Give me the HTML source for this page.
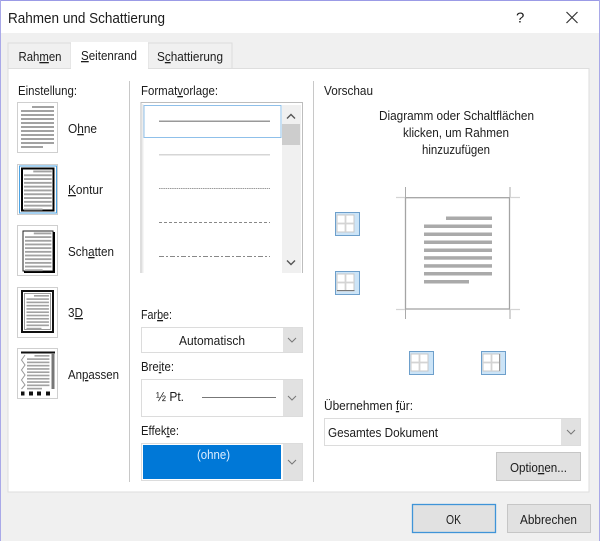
<!DOCTYPE html>
<html><head><meta charset="utf-8"><title>Rahmen und Schattierung</title>
<style>
html,body{margin:0;padding:0;background:#f0f0f0;width:600px;height:541px;overflow:hidden}
svg{display:block;position:absolute;left:0;top:0;filter:blur(.35px)}
text{font-family:"Liberation Sans",sans-serif;font-size:13px;fill:#1c1c1c}
.u{text-decoration:underline}
</style></head><body>
<svg width="600" height="541" viewBox="0 0 600 541" xmlns="http://www.w3.org/2000/svg">
<defs>
<g id="ln" fill="#a2a2a2">
<rect x="11" y="0" width="22" height="2"/><rect x="0" y="4" width="33" height="2"/><rect x="0" y="8" width="33" height="2"/><rect x="0" y="12" width="33" height="2"/><rect x="0" y="16" width="33" height="2"/><rect x="0" y="20" width="33" height="2"/><rect x="0" y="24" width="33" height="2"/><rect x="0" y="28" width="33" height="2"/><rect x="0" y="32" width="33" height="2"/><rect x="0" y="36" width="33" height="2"/><rect x="0" y="40" width="22" height="2"/>
</g>
<g id="cell"><rect x=".5" y=".5" width="24" height="23" fill="#cce4f7" stroke="#6d9fcb"/><rect x="2" y="3" width="17" height="17" fill="#fff" stroke="#c8c8c8" stroke-width="1"/><path d="M10.500 3V20M2 11.500H19" stroke="#d4d4d4" stroke-width="1.800"/></g>
<path id="chev" d="M-4-2 0 2 4-2" fill="none" stroke="#777" stroke-width="1"/>
</defs>

<rect width="600" height="541" fill="#f0f0f0"/>
<rect width="600" height="33" fill="#fff"/>
<rect width="600" height="1" fill="#9b9be6"/>
<rect width="1" height="541" fill="#a9a9e8"/>
<rect x="599" width="1" height="541" fill="#a9a9e8"/>
<text x="8" y="23" style="font-size:14.500px" textLength="157" lengthAdjust="spacingAndGlyphs">Rahmen und Schattierung</text>
<text x="516" y="22.500" style="font-size:15px" fill="#333">?</text>
<path d="M566.500 12 577.500 23M577.500 12 566.500 23" stroke="#333" stroke-width="1.200"/>

<!-- tabs and panel -->
<rect x="8" y="43" width="63" height="26" fill="#f0f0f0" stroke="#dcdcdc"/>
<rect x="148" y="43" width="84" height="26" fill="#f0f0f0" stroke="#dcdcdc"/>
<rect x="8" y="68.500" width="581" height="423.500" fill="#fff" stroke="#dedede"/>
<rect x="71" y="42" width="77" height="28" fill="#fff"/>
<text x="18.500" y="61" textLength="43" lengthAdjust="spacingAndGlyphs">Rah<tspan class="u">m</tspan>en</text>
<text x="81" y="60" textLength="56" lengthAdjust="spacingAndGlyphs"><tspan class="u">S</tspan>eitenrand</text>
<text x="157" y="61" textLength="66" lengthAdjust="spacingAndGlyphs">S<tspan class="u">c</tspan>hattierung</text>

<rect x="129" y="81" width="1" height="401" fill="#c8c8c8"/>
<rect x="313" y="81" width="1" height="401" fill="#c8c8c8"/>

<!-- Einstellung -->
<text x="18" y="95" textLength="59" lengthAdjust="spacingAndGlyphs">Einstellung:</text>
<g fill="#fff" stroke="#cfcfcf">
<rect x="17.500" y="102.500" width="40" height="50"/>
<rect x="17.500" y="164.500" width="40" height="50"/>
<rect x="17.500" y="225.500" width="40" height="50"/>
<rect x="17.500" y="287.500" width="40" height="50"/>
<rect x="17.500" y="348.500" width="40" height="50"/>
</g>
<use href="#ln" x="21" y="106"/>
<!-- Kontur -->
<rect x="19.500" y="166" width="37" height="47" fill="#fff" stroke="#4ba3e3"/>
<rect x="22" y="168.500" width="31.500" height="42" fill="#fff" stroke="#000" stroke-width="2"/>
<use href="#ln" transform="translate(24 170.500) scale(.84 .95)"/>
<!-- Schatten -->
<rect x="23" y="231" width="30" height="40" fill="#fff" stroke="#222" stroke-width="1"/>
<path d="M54 232V272H24" fill="none" stroke="#000" stroke-width="2"/>
<use href="#ln" transform="translate(25 232.500) scale(.8 .92)"/>
<!-- 3D -->
<rect x="22" y="291" width="31" height="41" fill="#fff" stroke="#111" stroke-width="2"/>
<rect x="24.500" y="293.500" width="26" height="36" fill="#fff" stroke="#999" stroke-width="1"/>
<use href="#ln" transform="translate(26.500 295) scale(.68 .82)"/>
<!-- Anpassen -->
<rect x="21" y="351.500" width="34" height="2" fill="#111"/>
<rect x="51.500" y="353" width="3" height="36" fill="#777"/>
<path d="M25 355 21.500 360 25 365 21.500 370 25 375 21.500 380 25 385 21.500 389" fill="none" stroke="#999" stroke-width="1"/>
<use href="#ln" transform="translate(27 355) scale(.68 .82)"/>
<g fill="#111"><rect x="21" y="391.500" width="3.500" height="4"/><rect x="29" y="391.500" width="4" height="4"/><rect x="37" y="391.500" width="4" height="4"/><rect x="46" y="391.500" width="4" height="4"/></g>
<text x="68" y="133" textLength="29" lengthAdjust="spacingAndGlyphs">O<tspan class="u">h</tspan>ne</text>
<text x="68" y="194" textLength="35" lengthAdjust="spacingAndGlyphs"><tspan class="u">K</tspan>ontur</text>
<text x="68" y="256" textLength="46" lengthAdjust="spacingAndGlyphs">Sch<tspan class="u">a</tspan>tten</text>
<text x="68" y="317" textLength="15" lengthAdjust="spacingAndGlyphs">3<tspan class="u">D</tspan></text>
<text x="68" y="379" textLength="51" lengthAdjust="spacingAndGlyphs">An<tspan class="u">p</tspan>assen</text>

<!-- Formatvorlage -->
<text x="141" y="95" textLength="77" lengthAdjust="spacingAndGlyphs">Format<tspan class="u">v</tspan>orlage:</text>
<rect x="141" y="102.500" width="161.500" height="170.500" fill="#fff"/>
<path d="M141 273V102.500H302.500V273" fill="none" stroke="#bdbdbd"/>
<rect x="142" y="104" width="1.500" height="169" fill="#ececec"/>
<rect x="144" y="105.500" width="137" height="32" fill="#fff" stroke="#8fc0ea"/>
<rect x="282" y="105" width="19" height="168" fill="#f0f0f0"/>
<rect x="282" y="124" width="18" height="21" fill="#cdcdcd"/>
<path d="M287 118.500 291 114.500 295 118.500" stroke="#555" stroke-width="1.400" fill="none"/>
<path d="M287 260.500 291 264.500 295 260.500" stroke="#555" stroke-width="1.400" fill="none"/>
<rect x="159" y="120.500" width="111" height="1.500" fill="#999"/>
<rect x="159" y="154" width="111" height="1.500" fill="#d6d6d6"/>
<path d="M159 188.500H270" stroke="#999" stroke-width="1" stroke-dasharray="1.500 .7"/>
<path d="M159 222.500H270" stroke="#888" stroke-width="1" stroke-dasharray="3 2"/>
<path d="M159 256.500H270" stroke="#888" stroke-width="1" stroke-dasharray="5 2 2 2"/>

<!-- Farbe -->
<text x="141" y="319" textLength="31" lengthAdjust="spacingAndGlyphs">Far<tspan class="u">b</tspan>e:</text>
<rect x="141.500" y="327.500" width="161" height="25" fill="#fff" stroke="#dcdcdc"/>
<rect x="283" y="328" width="19" height="24" fill="#e1e1e1"/>
<rect x="282" y="328" width="1" height="24" fill="#fff"/>
<text x="179" y="345" textLength="66" lengthAdjust="spacingAndGlyphs">Automatisch</text>
<use href="#chev" x="292" y="340"/>

<!-- Breite -->
<text x="141" y="371" textLength="33" lengthAdjust="spacingAndGlyphs">Bre<tspan class="u">i</tspan>te:</text>
<rect x="141.500" y="379.500" width="161" height="37" fill="#fff" stroke="#dcdcdc"/>
<rect x="283" y="380" width="19" height="36" fill="#e1e1e1"/>
<text x="156" y="401" textLength="28" lengthAdjust="spacingAndGlyphs">½ Pt.</text>
<rect x="202" y="397" width="74" height="1" fill="#777"/>
<use href="#chev" x="292" y="398"/>

<!-- Effekte -->
<text x="141" y="435" textLength="38" lengthAdjust="spacingAndGlyphs">Effek<tspan class="u">t</tspan>e:</text>
<rect x="141.500" y="443.500" width="161" height="37" fill="#fff" stroke="#dcdcdc"/>
<rect x="143" y="445" width="138" height="34" fill="#0078d7"/>
<rect x="283" y="444" width="19" height="36" fill="#e1e1e1"/>
<text x="197" y="459" textLength="33" lengthAdjust="spacingAndGlyphs" style="fill:#dceeff">(ohne)</text>
<use href="#chev" x="292" y="462"/>

<!-- Vorschau -->
<text x="324" y="95" textLength="49" lengthAdjust="spacingAndGlyphs">Vorschau</text>
<text x="379" y="120" textLength="155" lengthAdjust="spacingAndGlyphs">Diagramm oder Schaltflächen</text>
<text x="403" y="137" textLength="106" lengthAdjust="spacingAndGlyphs">klicken, um Rahmen</text>
<text x="422" y="154" textLength="68" lengthAdjust="spacingAndGlyphs">hinzuzufügen</text>

<rect x="405.500" y="197.700" width="104" height="111.300" fill="#fff" stroke="#a4a4a4" stroke-width="1.300"/>
<path d="M405.500 187V198M510 187V198M405.500 309V319M510 309V319" stroke="#aaa" stroke-width="1"/>
<path d="M396 197.500H405M511 197.500H520M396 309.500H405M511 309.500H520" stroke="#d4d4d4" stroke-width="1.200"/>
<g fill="#aaa">
<rect x="446" y="216.500" width="46" height="3.500"/>
<rect x="424" y="224.500" width="68" height="3.500"/>
<rect x="424" y="232.500" width="68" height="3.500"/>
<rect x="424" y="240.500" width="68" height="3.500"/>
<rect x="424" y="248.500" width="68" height="3.500"/>
<rect x="424" y="256.200" width="68" height="3.500"/>
<rect x="424" y="264.200" width="68" height="3.500"/>
<rect x="424" y="272" width="68" height="3.500"/>
<rect x="424" y="280" width="45" height="3.500"/>
</g>
<use href="#cell" x="335" y="212"/>
<use href="#cell" x="335" y="271"/>
<use href="#cell" x="409" y="351"/>
<use href="#cell" x="481" y="351"/>
<path d="M337 290.500H354.500" stroke="#777" stroke-width="1"/>
<path d="M499.500 354V371" stroke="#999" stroke-width="1"/>

<!-- Uebernehmen -->
<text x="324" y="410" textLength="89" lengthAdjust="spacingAndGlyphs">Übernehmen <tspan class="u">f</tspan>ür:</text>
<rect x="324.500" y="418.500" width="256" height="27" fill="#fff" stroke="#dcdcdc"/>
<rect x="561" y="419" width="19" height="26" fill="#e1e1e1"/>
<text x="328" y="437" textLength="110" lengthAdjust="spacingAndGlyphs">Gesamtes Dokument</text>
<use href="#chev" x="571" y="432"/>

<rect x="496.500" y="452.500" width="84" height="28" fill="#e1e1e1" stroke="#c6c6c6"/>
<text x="510" y="472" textLength="57" lengthAdjust="spacingAndGlyphs">Optio<tspan class="u">n</tspan>en...</text>

<rect x="412.500" y="504.500" width="83" height="28" fill="#e1e1e1" stroke="#3f94d8" stroke-width="1.300"/>
<text x="446" y="524" textLength="15" lengthAdjust="spacingAndGlyphs">OK</text>
<rect x="507.500" y="504.500" width="83" height="28" fill="#e1e1e1" stroke="#c6c6c6"/>
<text x="520" y="524" textLength="57" lengthAdjust="spacingAndGlyphs">Abbrechen</text>
</svg>
</body></html>
